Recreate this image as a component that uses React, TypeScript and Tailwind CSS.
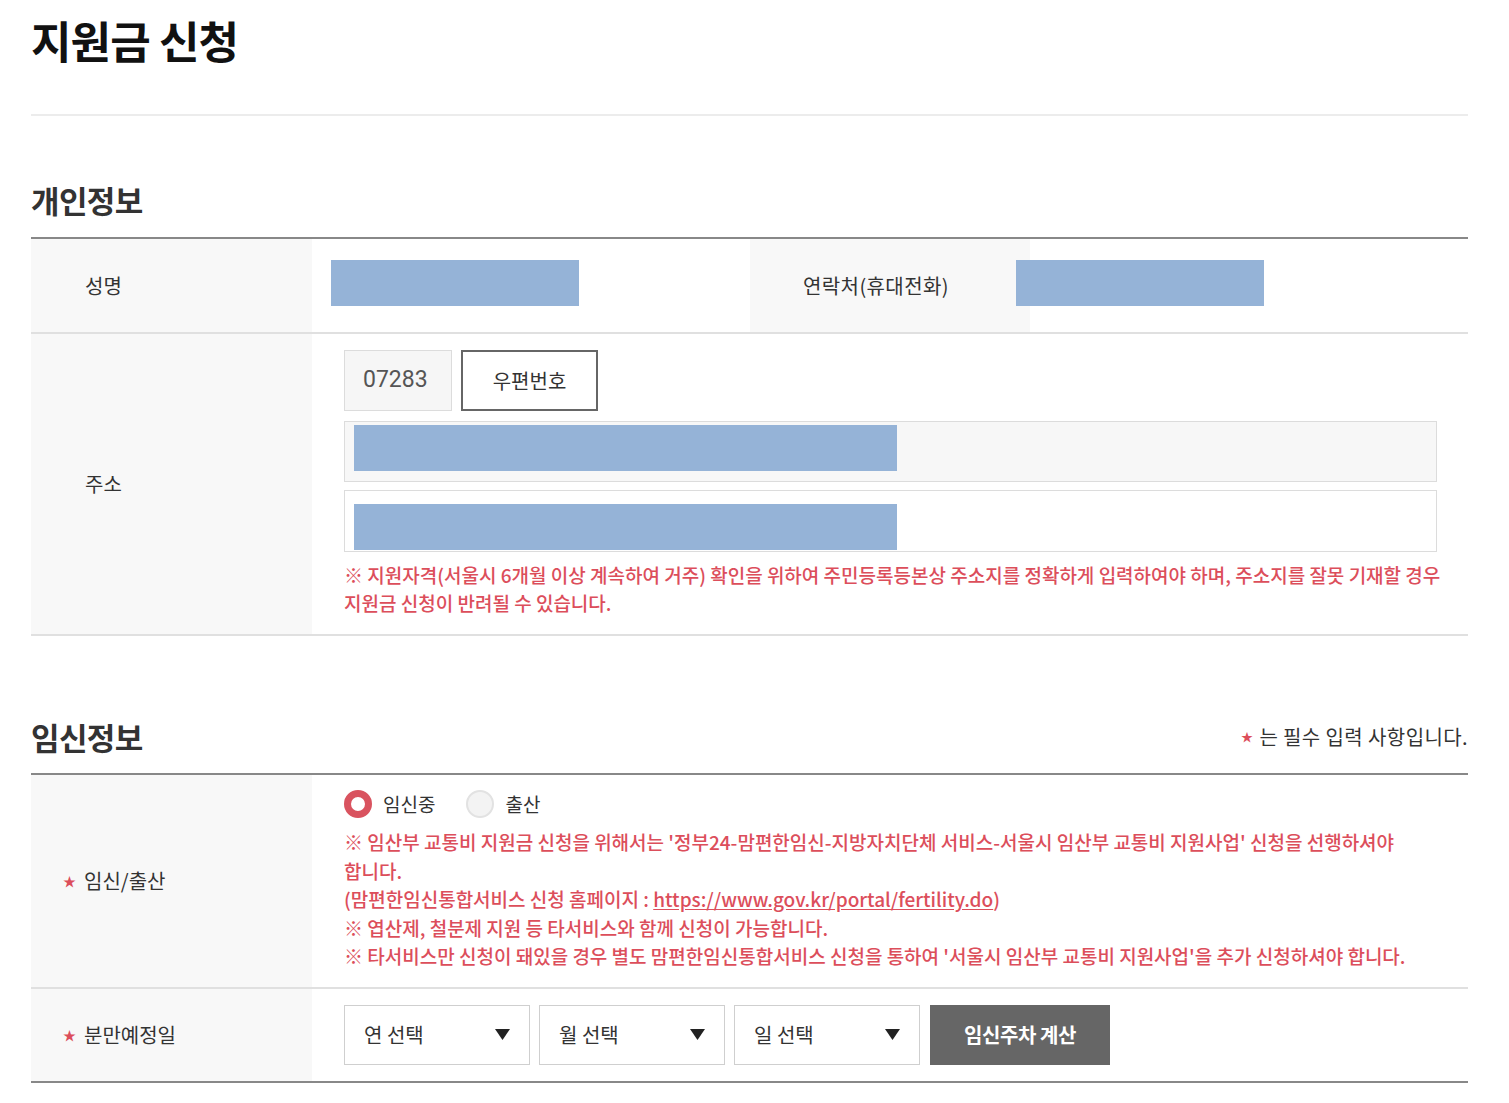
import React from 'react';

const FONT = '"Noto Sans CJK KR", "Noto Sans", sans-serif';

function Label({ text, required }: { text: string; required?: boolean }) {
  return (
    <div className="flex items-center bg-[#f8f8f8] pl-[32px] text-[20px] text-[#333]">
      <span className={`w-[21px] text-[13px] text-[#dc4e5b] ${required ? '' : 'invisible'}`}>★</span>
      <span>{text}</span>
    </div>
  );
}

function Select({ text }: { text: string }) {
  return (
    <div className="flex h-[60px] w-[186px] items-center justify-between border border-[#cfcfcf] bg-white pl-[19px] pr-[19px] text-[20px] text-[#333]">
      <span>{text}</span>
      <svg width="15" height="11" viewBox="0 0 15 11">
        <path d="M0 0 L15 0 L7.5 11 Z" fill="#222" />
      </svg>
    </div>
  );
}

export default function App() {
  return (
    <div className="min-h-screen bg-white" style={{ fontFamily: FONT }}>
      <div className="ml-[31px] w-[1437px] pb-[20px]">
        {/* Page title */}
        <div className="h-[114px] pt-[14px]">
          <h1 className="text-[44px] font-bold leading-[52px] tracking-[-0.02em] text-[#111]">지원금 신청</h1>
        </div>
        <div className="h-[2px] bg-[#ececec]" />

        {/* 개인정보 */}
        <div className="pt-[66px] pb-[19px]">
          <h2 className="text-[31px] font-bold leading-[36px] tracking-[-0.02em] text-[#333]">개인정보</h2>
        </div>
        <div className="border-t-2 border-[#888]">
          <div className="grid grid-cols-[281px_438px_280px_438px] border-b-2 border-[#e0e0e0]">
            <div className="flex h-[93px] items-center bg-[#f8f8f8] pl-[54px] text-[20px] text-[#333]">성명</div>
            <div className="pl-[19px] pt-[21px]">
              <div className="h-[46px] w-[248px] bg-[#95b3d7]" />
            </div>
            <div className="flex items-center bg-[#f8f8f8] pl-[53px] text-[20px] tracking-[0.02em] text-[#333]">연락처(휴대전화)</div>
            <div className="pt-[21px]">
              <div className="-ml-[14px] h-[46px] w-[248px] bg-[#95b3d7]" />
            </div>
          </div>

          <div className="grid grid-cols-[281px_1156px] border-b-2 border-[#e0e0e0]">
            <div className="flex items-center bg-[#f8f8f8] pl-[54px] text-[20px] text-[#333]">주소</div>
            <div className="pl-[32px] pr-[16px] pt-[16px] pb-[17px]">
              <div className="flex gap-[9px]">
                <div className="flex h-[61px] w-[108px] items-center border border-[#dcdcdc] bg-[#f6f6f6] pl-[18px] text-[23px] text-[#555]" style={{ fontFamily: 'Roboto, "Noto Sans CJK KR", sans-serif' }}>
                  07283
                </div>
                <button className="flex h-[61px] w-[137px] items-center justify-center border-2 border-[#666] bg-white text-[20px] text-[#333]">
                  우편번호
                </button>
              </div>
              <div className="mt-[10px] h-[61px] w-[1093px] border border-[#dcdcdc] bg-[#f7f7f7] pl-[9px] pt-[3px]">
                <div className="h-[46px] w-[543px] bg-[#95b3d7]" />
              </div>
              <div className="mt-[8px] h-[62px] w-[1093px] border border-[#dcdcdc] bg-white pl-[9px] pt-[13px]">
                <div className="h-[46px] w-[543px] bg-[#95b3d7]" />
              </div>
              <p className="mt-[9px] text-[19px] font-medium leading-[28px] text-[#dc4e5b]">
                ※ 지원자격(서울시 6개월 이상 계속하여 거주) 확인을 위하여 주민등록등본상 주소지를 정확하게 입력하여야 하며, 주소지를 잘못 기재할 경우
                <br />
                지원금 신청이 반려될 수 있습니다.
              </p>
            </div>
          </div>
        </div>

        {/* 임신정보 */}
        <div className="flex items-center justify-between pt-[83px] pb-[18px]">
          <h2 className="text-[31px] font-bold leading-[36px] tracking-[-0.02em] text-[#333]">임신정보</h2>
          <div className="flex items-center text-[20px] tracking-[0.02em] text-[#333]">
            <span className="mr-[6px] text-[12px] text-[#dc4e5b]">★</span>
            <span>는 필수 입력 사항입니다.</span>
          </div>
        </div>
        <div className="border-t-2 border-b-2 border-t-[#888] border-b-[#888]">
          <div className="grid grid-cols-[281px_1156px] border-b-2 border-[#e0e0e0]">
            <Label text="임신/출산" required />
            <div className="pl-[32px] pt-[14px] pb-[16px]">
              <div className="flex h-[30px] items-center text-[19px] text-[#333]">
                <span className="h-[28px] w-[28px] rounded-full border-[7px] border-[#d9535f] bg-white" />
                <span className="ml-[11px]">임신중</span>
                <span className="ml-[31px] h-[28px] w-[28px] rounded-full border-2 border-[#e2e2e2] bg-[#f3f3f3]" />
                <span className="ml-[11px]">출산</span>
              </div>
              <div className="mt-[9px] text-[19px] font-medium leading-[28.5px] text-[#dc4e5b]">
                <p>※ 임산부 교통비 지원금 신청을 위해서는 '정부24-맘편한임신-지방자치단체 서비스-서울시 임산부 교통비 지원사업' 신청을 선행하셔야<br />합니다.</p>
                <p>
                  (맘편한임신통합서비스 신청 홈페이지 : <span className="underline underline-offset-2">https://www.gov.kr/portal/fertility.do</span>)
                </p>
                <p>※ 엽산제, 철분제 지원 등 타서비스와 함께 신청이 가능합니다.</p>
                <p>※ 타서비스만 신청이 돼있을 경우 별도 맘편한임신통합서비스 신청을 통하여 '서울시 임산부 교통비 지원사업'을 추가 신청하셔야 합니다.</p>
              </div>
            </div>
          </div>

          <div className="grid grid-cols-[281px_1156px]">
            <Label text="분만예정일" required />
            <div className="flex gap-[9px] py-[16px] pl-[32px]">
              <Select text="연 선택" />
              <Select text="월 선택" />
              <Select text="일 선택" />
              <button className="ml-[1px] flex h-[60px] w-[180px] items-center justify-center bg-[#666] text-[20px] font-bold tracking-[-0.02em] text-white">
                임신주차 계산
              </button>
            </div>
          </div>
        </div>
      </div>
    </div>
  );
}
